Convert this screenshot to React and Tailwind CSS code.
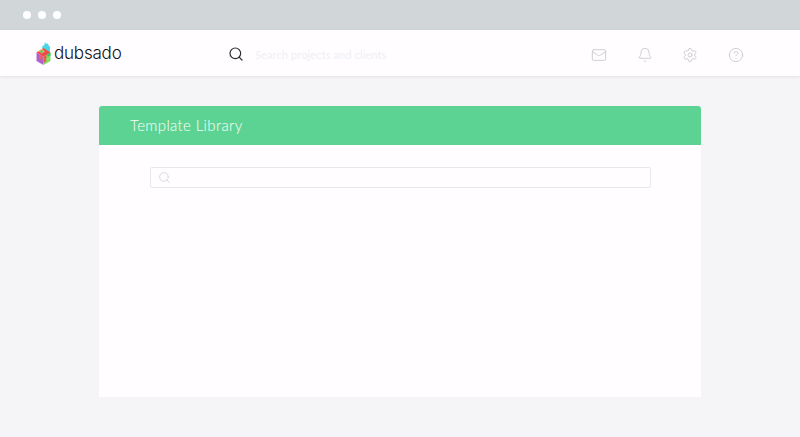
import React from 'react'
import { Mail, Bell, Settings, CircleHelp, Search } from 'lucide-react'

const NAV_ICONS = [
  { id: 'mail', icon: Mail },
  { id: 'bell', icon: Bell },
  { id: 'settings', icon: Settings },
  { id: 'help', icon: CircleHelp }
]

function Logo() {
  return (
    <svg width="15" height="24" viewBox="0 0 15 24" className="shrink-0">
      <path d="M6 7l1-3 1 1 1-4 1 2 1-1 3 4v10l-8-3z" fill="#4bd6e8" />
      <path d="M7.500 7L0.500 11.500 7.500 16 14.500 11.500z" fill="#ef4b4b" />
      <path d="M7.500 7L2.500 10.200 6 12.500 9 10 6.500 9z" fill="#f6c945" />
      <path d="M4 10l2-1 1 2-2 1z" fill="#3fc1a8" />
      <path d="M0.500 11.500V20L7.500 24V16z" fill="#ab62cf" />
      <path d="M3 13.500l3.500 2v3l-2-.5-.5 2-1-1z" fill="#f0605a" />
      <path d="M7.500 16V24L14.500 20V11.500z" fill="#7ee05e" />
      <path d="M7.500 16l3-2v3l-1 1 1 2-3 2z" fill="#ef5350" />
      <path d="M10.500 14l4-2.500v3l-2 1z" fill="#35c96f" />
    </svg>
  )
}

export default function App() {
  return (
    <div className="flex flex-col h-[437px] w-[800px] overflow-hidden bg-[#f5f4f6] font-['Lato',sans-serif]">
      {/* Browser chrome */}
      <div className="flex items-center gap-[7px] h-[30px] pl-[23px] bg-[#d1d6d9]">
        <span className="w-2 h-2 rounded-full bg-white" />
        <span className="w-2 h-2 rounded-full bg-white" />
        <span className="w-2 h-2 rounded-full bg-white" />
      </div>

      {/* Top nav */}
      <header className="flex items-center h-[46px] pl-[36px] bg-[#fffdff] shadow-[0_1px_3px_rgba(0,0,0,0.08)]">
        <div className="flex items-center gap-[3px] w-[192px]">
          <Logo />
          <span className="text-[17px] leading-none font-light text-[#101015] font-['Inter',sans-serif] tracking-[-0.2px]">dubsado</span>
        </div>
        <Search className="w-[16px] h-[16px] text-[#2b2b30] mt-[2px]" strokeWidth={1.8} />
        <span className="ml-[11px] w-[336px] text-[11px] text-[#f0eff2] tracking-[0.12px] mt-[4px]">Search projects and clients</span>
        <div className="flex items-center gap-[29.500px] mt-[3px]">
          {NAV_ICONS.map((item) => {
            const Icon = item.icon
            return <Icon key={item.id} className="w-[16px] h-[16px] text-[#cfcfd2]" strokeWidth={1.5} />
          })}
        </div>
      </header>

      {/* Main content */}
      <main className="flex-1 pt-[30px] pl-[99px]">
        <div className="w-[602px] h-[291px] rounded-t-[3px] overflow-hidden bg-[#fffdff]">
          <div className="flex items-center h-[39px] pl-[31px] bg-[#5dd393]">
            <h1 className="text-[15px] font-light text-white tracking-[0.35px]">Template Library</h1>
          </div>
          <div className="pt-[22px] pl-[51px]">
            <div className="flex items-center h-[21px] w-[501px] pl-[7px] border border-[#e8e8ea] rounded-[2px]">
              <Search className="w-[13px] h-[13px] text-[#d3d3d6]" strokeWidth={1.5} />
            </div>
          </div>
        </div>
      </main>
    </div>
  )
}
